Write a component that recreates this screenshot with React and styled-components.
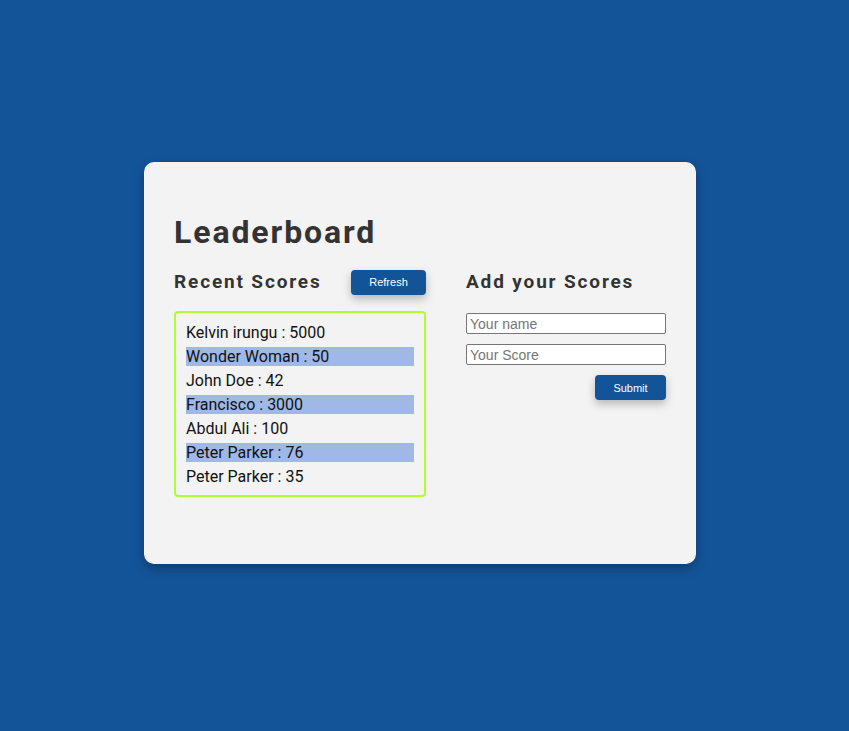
import React from "react";
import styled, { createGlobalStyle } from "styled-components";

const Global = createGlobalStyle`
  html, body { margin: 0; padding: 0; }
  body {
    background: #135499;
    font-family: Roboto, "Liberation Sans", sans-serif;
  }
`;

const Page = styled.div`
  min-height: 731px;
  display: flex;
  align-items: center;
  justify-content: center;
  padding: 0 9px 5px 0;
  box-sizing: border-box;
`;

const Card = styled.main`
  width: 552px;
  height: 402px;
  box-sizing: border-box;
  background: #f3f3f3;
  border-radius: 10px;
  padding: 50px 30px 30px;
  box-shadow: 0 4px 12px rgba(0, 0, 0, 0.3);
`;

const Title = styled.h1`
  margin: 0 0 16px;
  font-size: 32px;
  line-height: 40px;
  font-weight: 700;
  letter-spacing: 1.9px;
  color: #333;
`;

const Columns = styled.div`
  display: grid;
  grid-template-columns: 252px 200px;
  column-gap: 40px;
  align-items: start;
`;

const Column = styled.section`
  display: flex;
  flex-direction: column;
`;

const HeadRow = styled.div`
  display: flex;
  align-items: center;
  justify-content: space-between;
  height: 28px;
  margin-bottom: ${(p) => p.$mb}px;
`;

const Heading = styled.h2`
  margin: 0;
  font-size: 19px;
  line-height: 28px;
  font-weight: 700;
  letter-spacing: 1.85px;
  color: #333;
`;

const Button = styled.button`
  width: ${(p) => p.$w}px;
  height: 25px;
  border: none;
  border-radius: 4px;
  background: #135499;
  color: #fff;
  font-family: "Liberation Sans", Arial, sans-serif;
  font-size: 11px;
  box-shadow: 0 4px 8px rgba(0, 0, 0, 0.25);
  cursor: pointer;
`;

const List = styled.ul`
  list-style: none;
  margin: 0;
  padding: 10px 10px 9px;
  border: 2px solid #adff2f;
  border-radius: 4px;
  display: flex;
  flex-direction: column;
  gap: 5px;
`;

const Item = styled.li`
  font-size: 16px;
  line-height: 19px;
  color: #111;
  background: ${(p) => (p.$alt ? "#a0b8e6" : "transparent")};
`;

const Form = styled.form`
  display: flex;
  flex-direction: column;
  align-items: flex-end;
  gap: 10px;
`;

const Input = styled.input`
  width: 200px;
  height: 21px;
  box-sizing: border-box;
  border: 1px solid #767676;
  border-radius: 2px;
  background: #fff;
  padding: 0 3px;
  font-family: "Liberation Sans", Arial, sans-serif;
  font-size: 14px;
  &::placeholder { color: #757575; }
`;

const scores = [
  ["Kelvin irungu", 5000],
  ["Wonder Woman", 50],
  ["John Doe", 42],
  ["Francisco", 3000],
  ["Abdul Ali", 100],
  ["Peter Parker", 76],
  ["Peter Parker", 35],
];

export default function App() {
  return (
    <>
      <Global />
      <Page>
        <Card>
          <Title>Leaderboard</Title>
          <Columns>
            <Column>
              <HeadRow $mb={15}>
                <Heading>Recent Scores</Heading>
                <Button $w={75} type="button">Refresh</Button>
              </HeadRow>
              <List>
                {scores.map(([n, s], i) => (
                  <Item key={i} $alt={i % 2 === 1}>{n} : {s}</Item>
                ))}
              </List>
            </Column>
            <Column>
              <HeadRow $mb={17}>
                <Heading>Add your Scores</Heading>
              </HeadRow>
              <Form onSubmit={(e) => e.preventDefault()}>
                <Input placeholder="Your name" />
                <Input placeholder="Your Score" />
                <Button $w={71} type="submit">Submit</Button>
              </Form>
            </Column>
          </Columns>
        </Card>
      </Page>
    </>
  );
}
